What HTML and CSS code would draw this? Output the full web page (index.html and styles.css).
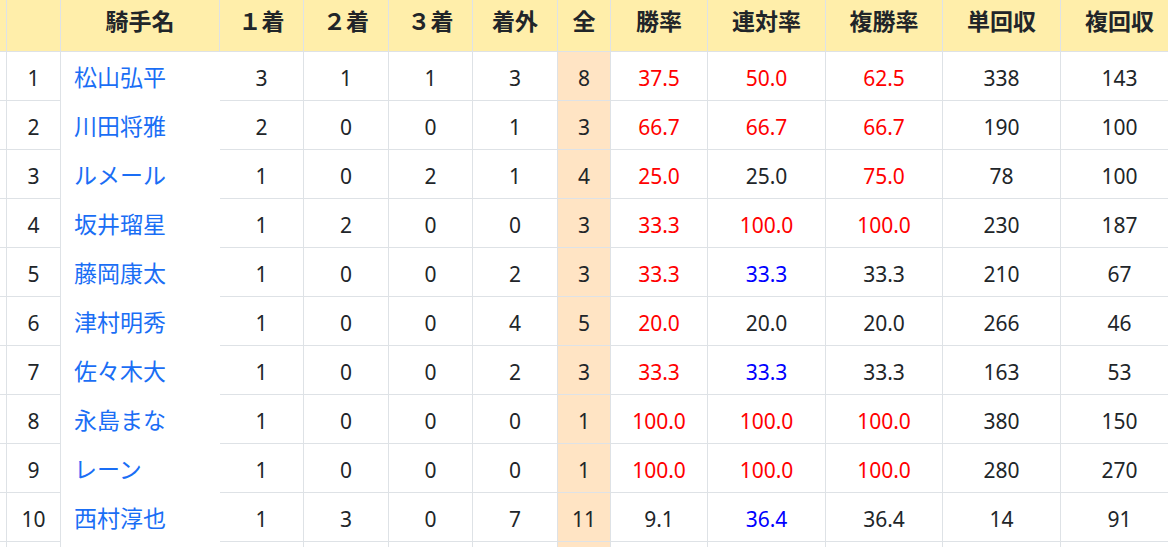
FILE: index.html
```html
<!DOCTYPE html>
<html lang="ja">
<head>
<meta charset="utf-8">
<title>騎手成績</title>
<link rel="stylesheet" href="styles.css">
</head>
<body>
<div class="wrap">
<table class="stats">
<colgroup>
<col class="c-stub"><col class="c-no"><col class="c-name"><col class="c-n"><col class="c-n2"><col class="c-n"><col class="c-n2"><col class="c-all"><col class="c-win"><col class="c-r"><col class="c-r2"><col class="c-r"><col class="c-r">
</colgroup>
<thead>
<tr>
<th></th><th></th><th>騎手名</th><th>１着</th><th>２着</th><th>３着</th><th>着外</th><th>全</th><th>勝率</th><th>連対率</th><th>複勝率</th><th>単回収</th><th>複回収</th>
</tr>
</thead>
<tbody>
<tr><td></td><td>1</td><td class="name"><a href="#">松山弘平</a></td><td>3</td><td>1</td><td>1</td><td>3</td><td class="all">8</td><td class="red">37.5</td><td class="red">50.0</td><td class="red">62.5</td><td>338</td><td>143</td></tr>
<tr><td></td><td>2</td><td class="name"><a href="#">川田将雅</a></td><td>2</td><td>0</td><td>0</td><td>1</td><td class="all">3</td><td class="red">66.7</td><td class="red">66.7</td><td class="red">66.7</td><td>190</td><td>100</td></tr>
<tr><td></td><td>3</td><td class="name"><a href="#">ルメール</a></td><td>1</td><td>0</td><td>2</td><td>1</td><td class="all">4</td><td class="red">25.0</td><td>25.0</td><td class="red">75.0</td><td>78</td><td>100</td></tr>
<tr><td></td><td>4</td><td class="name"><a href="#">坂井瑠星</a></td><td>1</td><td>2</td><td>0</td><td>0</td><td class="all">3</td><td class="red">33.3</td><td class="red">100.0</td><td class="red">100.0</td><td>230</td><td>187</td></tr>
<tr><td></td><td>5</td><td class="name"><a href="#">藤岡康太</a></td><td>1</td><td>0</td><td>0</td><td>2</td><td class="all">3</td><td class="red">33.3</td><td class="blue">33.3</td><td>33.3</td><td>210</td><td>67</td></tr>
<tr><td></td><td>6</td><td class="name"><a href="#">津村明秀</a></td><td>1</td><td>0</td><td>0</td><td>4</td><td class="all">5</td><td class="red">20.0</td><td>20.0</td><td>20.0</td><td>266</td><td>46</td></tr>
<tr><td></td><td>7</td><td class="name"><a href="#">佐々木大</a></td><td>1</td><td>0</td><td>0</td><td>2</td><td class="all">3</td><td class="red">33.3</td><td class="blue">33.3</td><td>33.3</td><td>163</td><td>53</td></tr>
<tr><td></td><td>8</td><td class="name"><a href="#">永島まな</a></td><td>1</td><td>0</td><td>0</td><td>0</td><td class="all">1</td><td class="red">100.0</td><td class="red">100.0</td><td class="red">100.0</td><td>380</td><td>150</td></tr>
<tr><td></td><td>9</td><td class="name"><a href="#">レーン</a></td><td>1</td><td>0</td><td>0</td><td>0</td><td class="all">1</td><td class="red">100.0</td><td class="red">100.0</td><td class="red">100.0</td><td>280</td><td>270</td></tr>
<tr><td></td><td>10</td><td class="name"><a href="#">西村淳也</a></td><td>1</td><td>3</td><td>0</td><td>7</td><td class="all">11</td><td>9.1</td><td class="blue">36.4</td><td>36.4</td><td>14</td><td>91</td></tr>
<tr class="more"><td></td><td></td><td class="name"></td><td></td><td></td><td></td><td></td><td class="all"></td><td></td><td></td><td></td><td></td><td></td></tr>
</tbody>
</table>
</div>
</body>
</html>
```

FILE: styles.css
```css
html, body {
  margin: 0;
  padding: 0;
  overflow: hidden;
  background: #fff;
}

.wrap {
  width: 1168px;
  height: 547px;
  overflow: hidden;
}

.stats {
  width: 1179px;
  table-layout: fixed;
  border-collapse: separate;
  border-spacing: 0;
  font-family: "Noto Sans", "Noto Sans CJK JP", sans-serif;
  font-size: 21px;
  color: #212529;
}

.c-stub { width: 7px; }
.c-no { width: 54px; }
.c-name { width: 159px; }
.c-n { width: 84px; }
.c-n2 { width: 85px; }
.c-all { width: 53px; }
.c-win { width: 97px; }
.c-r { width: 118px; }
.c-r2 { width: 117px; }

.stats th,
.stats td {
  border-right: 1px solid #dee2e6;
  border-bottom: 1px solid #dee2e6;
  text-align: center;
  white-space: nowrap;
  overflow: hidden;
}

.stats th {
  background: #ffeeaa;
  font-family: "Noto Sans CJK JP", sans-serif;
  font-weight: 700;
  font-size: 23px;
  line-height: 30px;
  height: 30px;
  padding: 5px 0 16px;
}

.stats td {
  line-height: 30px;
  height: 30px;
  padding: 11px 0 7px;
}

.stats td.name {
  text-align: left;
  padding: 9px 0 9px 13px;
  border-right-color: #fff;
  border-bottom-color: #fff;
  font-family: "Noto Sans CJK JP", sans-serif;
  font-size: 23px;
}

.stats td.name a {
  color: #1a6ef5;
  text-decoration: none;
}

.stats td.all {
  background: #ffe4c4;
}

.stats td.red { color: #ff0000; }
.stats td.blue { color: #0000ff; }
```
